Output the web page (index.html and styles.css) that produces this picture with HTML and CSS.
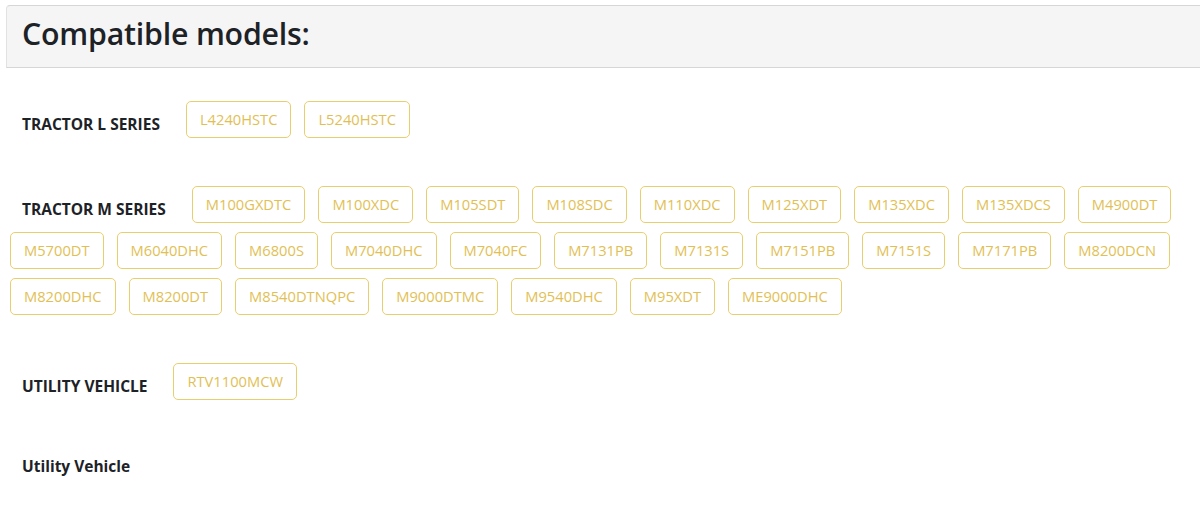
FILE: index.html
```html
<!DOCTYPE html>
<html lang="en">
<head>
  <meta charset="UTF-8" />
  <meta name="viewport" content="width=device-width, initial-scale=1.0" />
  <title>Compatible models</title>
  <link rel="stylesheet" href="styles.css">
</head>
<body>

<div class="panel-heading">
  <h2>Compatible models:</h2>
</div>

<div class="models">
  <div class="series">
    <span class="series-name">TRACTOR L SERIES</span>
    <a class="model" href="#">L4240HSTC</a>
    <a class="model" href="#">L5240HSTC</a>
  </div>

  <div class="series">
    <span class="series-name">TRACTOR M SERIES</span>
    <a class="model" href="#">M100GXDTC</a>
    <a class="model" href="#">M100XDC</a>
    <a class="model" href="#">M105SDT</a>
    <a class="model" href="#">M108SDC</a>
    <a class="model" href="#">M110XDC</a>
    <a class="model" href="#">M125XDT</a>
    <a class="model" href="#">M135XDC</a>
    <a class="model" href="#">M135XDCS</a>
    <a class="model" href="#">M4900DT</a>
    <a class="model" href="#">M5700DT</a>
    <a class="model" href="#">M6040DHC</a>
    <a class="model" href="#">M6800S</a>
    <a class="model" href="#">M7040DHC</a>
    <a class="model" href="#">M7040FC</a>
    <a class="model" href="#">M7131PB</a>
    <a class="model" href="#">M7131S</a>
    <a class="model" href="#">M7151PB</a>
    <a class="model" href="#">M7151S</a>
    <a class="model" href="#">M7171PB</a>
    <a class="model" href="#">M8200DCN</a>
    <a class="model" href="#">M8200DHC</a>
    <a class="model" href="#">M8200DT</a>
    <a class="model" href="#">M8540DTNQPC</a>
    <a class="model" href="#">M9000DTMC</a>
    <a class="model" href="#">M9540DHC</a>
    <a class="model" href="#">M95XDT</a>
    <a class="model" href="#">ME9000DHC</a>
  </div>

  <div class="series">
    <span class="series-name">UTILITY VEHICLE</span>
    <a class="model" href="#">RTV1100MCW</a>
  </div>

  <div class="series series-empty">
    <span class="series-name">Utility Vehicle</span>
  </div>
</div>

</body>
</html>
```

FILE: styles.css
```css
body {
  margin: 0;
  padding: 5px 0 0 6px;
  font-family: "Open Sans", "Noto Sans", sans-serif;
  background: #fff;
  color: #212529;
}
.panel-heading {
  background: #f5f5f5;
  border-top: 1px solid #d6d6d6;
  border-bottom: 1px solid #d6d6d6;
  border-left: 1px solid #e2e2e2;
  border-top-left-radius: 4px;
  display: flex;
  align-items: center;
  padding: 0 0 7px 15px;
  box-sizing: border-box;
  height: 63px;
}
.panel-heading h2 {
  margin: 0;
  font-size: 30.3px;
  font-weight: 600;
  color: #1d2227;
  letter-spacing: -0.2px;
}
.models {
  margin-left: -2px;
  padding: 33px 0 0 6px;
}
.series {
  display: flex;
  flex-wrap: wrap;
  gap: 9px 13px;
  margin-bottom: 48px;
}
.series-name {
  padding: 12px 13px 0 12px;
  font-size: 15.5px;
  font-weight: 700;
  color: #1d2227;
}
.series-empty .series-name {
  padding-top: 7px;
}
.model {
  display: inline-block;
  height: 37px;
  box-sizing: border-box;
  line-height: 35px;
  padding: 0 13px;
  border: 1px solid #e8cf6e;
  border-radius: 5px;
  font-size: 14.7px;
  color: #e2bf55;
  text-decoration: none;
}
```
